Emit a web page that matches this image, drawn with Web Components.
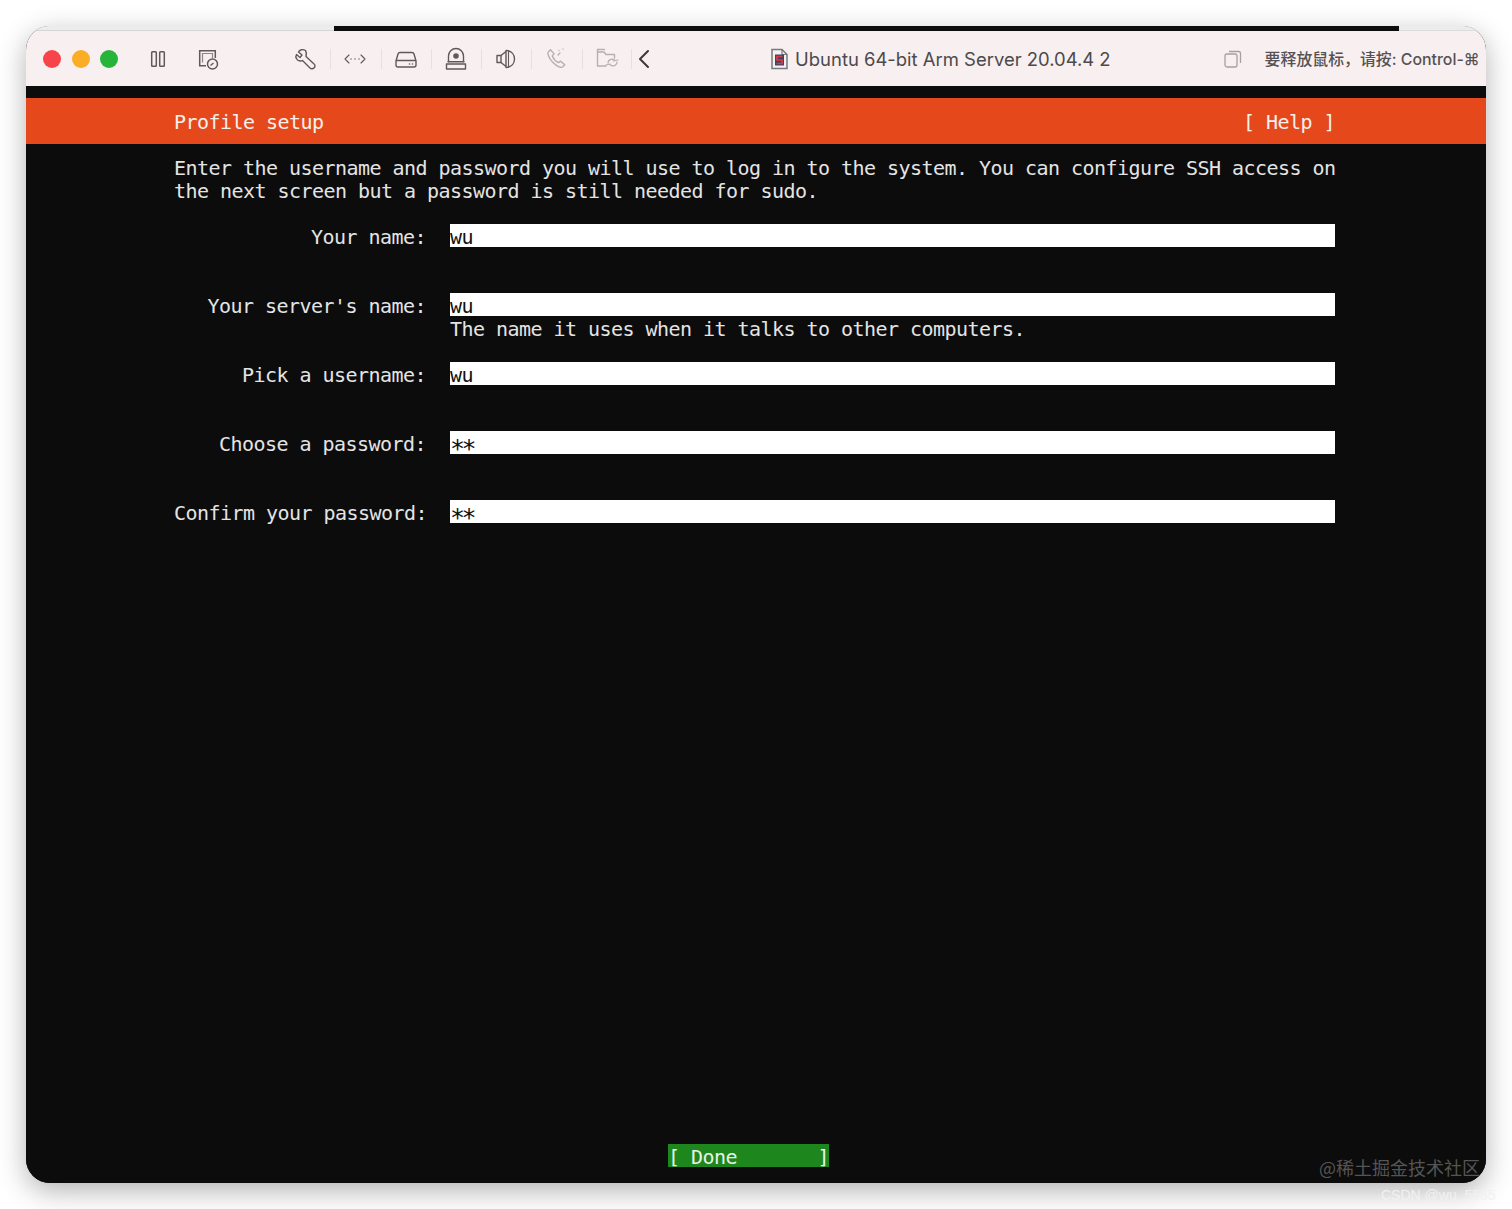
<!DOCTYPE html>
<html>
<head>
<meta charset="utf-8">
<style>
  html, body { margin: 0; height: 100%; background: #fff; }
  body { padding: 26px 26px 26px; box-sizing: border-box; height: 1209px; overflow: hidden; }
</style>
</head>
<body>
<vm-window>
  <vm-toolbar slot="toolbar"></vm-toolbar>
  <installer-header title="Profile setup"></installer-header>
  <installer-body>
    <form-field label="Your name:" value="wu"></form-field>
    <form-field label="Your server's name:" value="wu" help="The name it uses when it talks to other computers."></form-field>
    <form-field label="Pick a username:" value="wu"></form-field>
    <form-field label="Choose a password:" value="**" masked></form-field>
    <form-field label="Confirm your password:" value="**" masked></form-field>
  </installer-body>
  <done-button></done-button>
</vm-window>
<script>
const MONO = `"DejaVu Sans Mono", "Liberation Mono", monospace`;
const termFont = `font: 20px/23px ${MONO}; letter-spacing: -0.54px;`;

class VmWindow extends HTMLElement {
  constructor() {
    super();
    this.attachShadow({ mode: 'open' });
    this.shadowRoot.innerHTML = `
      <style>
        :host { display: block; position: relative; height: 1157px; border-radius: 24px;
          box-shadow: 0 8px 28px rgba(0,0,0,.3); background: #0c0c0c; }
        .clip { height: 100%; border-radius: 24px; overflow: hidden; display: flex; flex-direction: column; }
        .screen { flex: 1; display: flex; flex-direction: column; background: #0c0c0c; padding-top: 12px; min-height: 0; }
        .mark { position: absolute; left: 1293px; top: 1129px; font: 18px/24px "Noto Sans CJK SC", sans-serif; color: #555; white-space: nowrap; }
        .csdn { position: absolute; left: 1355px; top: 1160px; font: 14px/18px "Liberation Sans", sans-serif; color: #f1f1f1; white-space: nowrap; }
      </style>
      <div class="clip">
        <slot name="toolbar"></slot>
        <div class="screen"><slot></slot></div>
      </div>
      <div class="mark">@稀土掘金技术社区</div>
      <div class="csdn">CSDN @wu_5555</div>`;
  }
}

class VmToolbar extends HTMLElement {
  constructor() {
    super();
    this.attachShadow({ mode: 'open' });
    const ic = (body, cls = '') => `<span class="slot ${cls}"><svg width="26" height="26" viewBox="0 0 26 26" fill="none" stroke="currentColor" stroke-width="1.4" stroke-linecap="round" stroke-linejoin="round">${body}</svg></span>`;
    this.shadowRoot.innerHTML = `
      <style>
        :host { display: block; flex: none; height: 60px; position: relative; background: #f8eff0; color: #5f595a; }
        .top { display: flex; height: 5px; }
        .top i { display: block; }
        .top .a { width: 308px; background: linear-gradient(#ececec 70%, #c9c9c9); }
        .top .b { flex: 1; background: #0c0c0c; }
        .top .c { width: 87px; background: linear-gradient(#ececec 70%, #d4d4d4); }
        .bar { display: flex; align-items: center; height: 55px; padding-left: 17px; }
        .dots { display: flex; gap: 10.5px; width: 92px; flex: none; }
        .dots i { width: 18px; height: 18px; border-radius: 50%; flex: none; }
        .solo { width: 28px; height: 26px; display: flex; justify-content: center; align-items: center; flex: none; position: relative; }
        .group { display: flex; margin-left: 58px; flex: none; }
        .slot { width: 50.3px; height: 30px; display: flex; justify-content: center; align-items: center; position: relative; flex: none; }
        .slot + .slot::before, .slot:last-child::after { content: ""; position: absolute; left: 0; top: 5px; bottom: 5px; width: 1px; background: #e9dfe0; }
        .slot:last-child::after { left: auto; right: 0; }
        .faded { color: #b5b0b1; }
        .title { display: flex; align-items: center; gap: 6px; margin-left: 114px; flex: none; font: 18.45px/24px "Inter", "Liberation Sans", sans-serif; color: #4d4a4b; white-space: nowrap; }
        .restore { margin-left: 112px; display: flex; flex: none; color: #a5a0a1; }
        .hint { margin-left: 22px; padding-top: 2px; font: 500 15.9px/20px "Inter", "Noto Sans CJK SC", sans-serif; color: #565253; white-space: nowrap; }
      </style>
      <div class="top"><i class="a"></i><i class="b"></i><i class="c"></i></div>
      <div class="bar">
        <span class="dots">
          <i style="background:#f7434a"></i><i style="background:#fbad25"></i><i style="background:#27b43b"></i>
        </span>
        <span class="solo" style="margin-left:9px"><svg width="18" height="18" viewBox="0 0 18 18" fill="none" stroke="currentColor" stroke-width="1.5"><rect x="2.7" y="1.7" width="4.6" height="14.6" rx=".8"/><rect x="10.7" y="1.7" width="4.6" height="14.6" rx=".8"/></svg></span>
        <span class="solo" style="margin-left:22px"><svg width="24" height="24" viewBox="0 0 24 24" fill="none" stroke="currentColor" stroke-width="1.5"><path d="M10 18.7H3.700V3.700h15.600V11"/><path d="M6.500 15.500V6.500h10V11" stroke-width="1.200" opacity=".7"/><circle cx="16.500" cy="17" r="5" fill="#f8eff0"/><path d="M14.500 18.500l3-2.500" stroke-width="1.300"/></svg></span>
        <span class="group">
          ${ic('<path d="M13.500 4.500C11 3 7.500 3.500 6.500 6L10 9l-2 2.500L4.500 8.500C3 11 4.500 14.500 8 15c1 .2 2-.2 2.500-.5l7.500 7.500c1.500 1.500 5 .5 5-2 0-1.500-.5-1.700-1.500-2.500L14 10.500c.5-2 .5-4.500-.5-6z"/>')}
          ${ic('<path d="M7 9l-4 4 4 4M19 9l4 4-4 4" stroke-width="1.100"/><path d="M9 13h.01M13 13h.01M17 13h.01" stroke-width="1.400"/>')}
          ${ic('<path d="M7 6.500h12c1 0 1.700.6 2 1.500l2 7v4a2 2 0 0 1-2 2H5a2 2 0 0 1-2-2v-4l2-7c.3-.9 1-1.500 2-1.500z"/><path d="M3.500 14.500h19"/><path d="M16.500 18h.01M19.500 18h.01" stroke-width="1.600"/>')}
          ${ic('<path d="M5.500 15.500V10a7.500 7.500 0 0 1 15 0v5.500"/><circle cx="13" cy="10" r="2.800" fill="currentColor" stroke="none"/><rect x="3.500" y="18" width="19" height="5"/><path d="M5 15.800h16"/>')}
          ${ic('<path d="M4 9.500h4L13 5.500v15l-5-4H4z"/><path d="M8 9.500v7"/><path d="M13 4.500c6 .5 8.500 4.500 8.500 8.500s-2.500 8-8.500 8.500"/><path d="M15.500 5v16" stroke-width="1.100"/>')}
          ${ic('<path d="M6.500 3.800L4.300 6c-.6.6-.6 2 .2 3.800 1.600 4.400 6.200 9.400 10.500 11 1.800.7 3.100.7 3.800 0l2-2.100-4.300-3.600-2 1.600c-2.600-1.300-5-3.900-6.200-6.800l1.800-2z"/><path d="M15 4.500v.01M19 3v.01M14 9l2-2" stroke-width="1.300"/>', 'faded')}
          ${ic('<path d="M12 20H3.500V6h6.500l2 2.500h8.500v3.500"/><path d="M3.500 6V3.500h7"/><path d="M14 17a4 4 0 0 1 7-2.500M23 16a4 4 0 0 1-7 2.500M12 19l4-1M19 15l5-1" stroke-width="1.200"/>', 'faded')}
        </span>
        <span class="solo" style="width:24px"><svg width="16" height="22" viewBox="0 0 16 22" fill="none" stroke="#3c3839" stroke-width="2" stroke-linecap="round" stroke-linejoin="round"><path d="M12 3L4 11l8 8"/></svg></span>
        <span class="title"><svg width="19" height="24" viewBox="0 0 19 24"><path d="M2 2.500h10l5 5v14H2z" fill="#f4f1f2" stroke="#77787f" stroke-width="1.500"/><path d="M12 2.500v5h5" fill="none" stroke="#77787f" stroke-width="1.200"/><rect x="5" y="7.500" width="9" height="11" fill="#3d4468"/><path d="M12.500 9.500H7v3.500h5v3.500H6.500" fill="none" stroke="#e5383e" stroke-width="1.700"/></svg><span>Ubuntu 64-bit Arm Server 20.04.4 2</span></span>
        <span class="restore"><svg width="20" height="20" viewBox="0 0 20 20" fill="none" stroke="currentColor" stroke-width="1.300"><rect x="2" y="5" width="12" height="13" rx="2"/><path d="M6 2.500h9.500a2 2 0 0 1 2 2V14"/></svg></span>
        <span class="hint">要释放鼠标，请按: Control-⌘</span>
      </div>`;
  }
}

class InstallerHeader extends HTMLElement {
  connectedCallback() {
    if (this.shadowRoot) return;
    this.attachShadow({ mode: 'open' });
    this.shadowRoot.innerHTML = `
      <style>
        :host { display: block; flex: none; height: 46px; background: #e5491b; color: #f5f0ec; }
        .row { ${termFont} white-space: pre; display: flex; justify-content: space-between; width: 1161px; margin-left: 148px; padding-top: 13px; }
      </style>
      <div class="row"><span>${this.getAttribute('title')}</span><span>[ Help ]</span></div>`;
  }
}

class InstallerBody extends HTMLElement {
  constructor() {
    super();
    this.attachShadow({ mode: 'open' });
    this.shadowRoot.innerHTML = `
      <style>
        :host { display: block; flex: none; padding: 13px 0 0 148px; color: #e4e4e4; }
        p { ${termFont} white-space: pre; margin: 0 0 21px; }
        .list { display: flex; flex-direction: column; gap: 23px; }
      </style>
      <p>Enter the username and password you will use to log in to the system. You can configure SSH access on
the next screen but a password is still needed for sudo.</p>
      <div class="list"><slot></slot></div>`;
  }
}

class FormField extends HTMLElement {
  connectedCallback() {
    if (this.shadowRoot) return;
    this.attachShadow({ mode: 'open' });
    this.shadowRoot.innerHTML = `
      <style>
        :host { display: grid; grid-template-columns: 252px 885px; column-gap: 24px; grid-auto-rows: 23px; height: 46px; ${termFont} white-space: pre; color: #e4e4e4; }
        .label { text-align: right; padding-top: 2px; box-sizing: border-box; height: 23px; }
        .input { background: #fff; color: #111; padding-top: 2px; box-sizing: border-box; height: 23px; line-height: 23px; }
        .masked { font-size: 25px; letter-spacing: -3.55px; line-height: 18px; padding-top: 9px; }
        .help { grid-column: 2; padding-top: 2px; box-sizing: border-box; height: 23px; }
      </style>
      <div class="label">${this.getAttribute('label')}</div>
      <div class="input ${this.hasAttribute('masked') ? 'masked' : ''}">${this.getAttribute('value')}</div>
      ${this.hasAttribute('help') ? `<div class="help">${this.getAttribute('help')}</div>` : ''}`;
  }
}

class DoneButton extends HTMLElement {
  constructor() {
    super();
    this.attachShadow({ mode: 'open' });
    this.shadowRoot.innerHTML = `
      <style>
        :host { display: block; flex: none; width: 161px; height: 23px; margin: auto 0 16px 642px; background: #1d871e; color: #e9f3e6; }
        div { ${termFont} white-space: pre; padding-top: 2px; box-sizing: border-box; height: 23px; }
      </style>
      <div>[ Done       ]</div>`;
  }
}

customElements.define('vm-window', VmWindow);
customElements.define('vm-toolbar', VmToolbar);
customElements.define('installer-header', InstallerHeader);
customElements.define('installer-body', InstallerBody);
customElements.define('form-field', FormField);
customElements.define('done-button', DoneButton);
</script>
</body>
</html>
